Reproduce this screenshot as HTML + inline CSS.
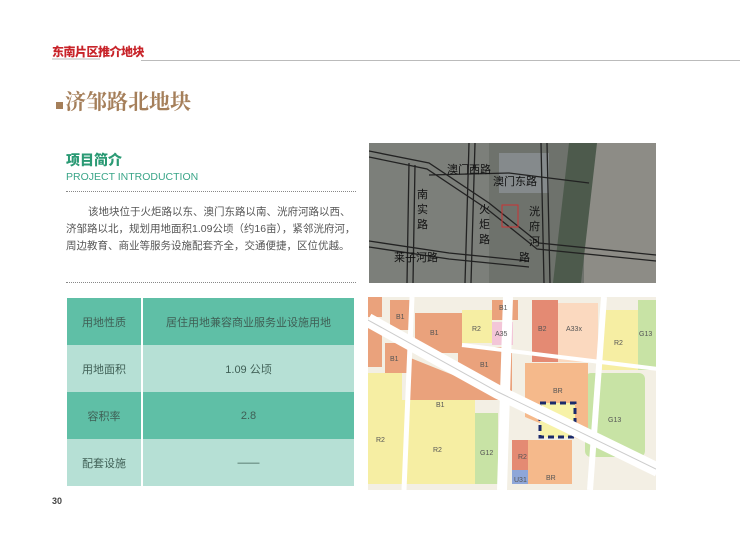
<!DOCTYPE html>
<html><head><meta charset="utf-8"><style>
body{margin:0;width:740px;height:545px;background:#fff;position:relative;overflow:hidden;font-family:"Liberation Sans","Noto Sans CJK SC",sans-serif}
.a{position:absolute}
table{border-collapse:collapse}
td{text-align:center;color:#3f5f55;font-size:11px;height:47px;padding:0}
</style></head><body>
<div class="a" style="left:52px;top:43px;font-size:12px;font-weight:900;color:#c8242a;letter-spacing:-0.5px;font-family:'Noto Sans CJK SC',sans-serif">东南片区推介地块</div>
<div class="a" style="left:52px;top:58px;width:48px;height:2px;background:#ddd"></div>
<div class="a" style="left:141px;top:60px;width:599px;height:1px;background:#bbb"></div>
<div class="a" style="left:56px;top:102px;width:7px;height:7px;background:#a57f5a"></div>
<div class="a" style="left:65px;top:86px;font-size:21px;font-weight:bold;color:#a57f5a;font-family:'Noto Serif CJK SC',serif">济邹路北地块</div>
<div class="a" style="left:66px;top:150px;font-size:14px;font-weight:900;color:#2a9a74;font-family:'Noto Sans CJK SC',sans-serif">项目简介</div>
<div class="a" style="left:66px;top:171px;font-size:10.5px;color:#3aa588">PROJECT INTRODUCTION</div>
<div class="a" style="left:66px;top:191px;width:290px;border-top:1px dotted #888"></div>
<div class="a" style="left:66px;top:204px;width:290px;font-size:10.5px;line-height:17px;color:#555;text-indent:22px;font-family:'Liberation Sans','Noto Sans CJK SC',sans-serif">该地块位于火炬路以东、澳门东路以南、洸府河路以西、济邹路以北，规划用地面积1.09公顷（约16亩），紧邻洸府河，周边教育、商业等服务设施配套齐全，交通便捷，区位优越。</div>
<div class="a" style="left:66px;top:282px;width:290px;border-top:1px dotted #888"></div>
<table class="a" style="left:67px;top:298px;width:287px">
<tr style="background:#5fbfa6"><td style="width:74px;border-right:2px solid #fff">用地性质</td><td>居住用地兼容商业服务业设施用地</td></tr>
<tr style="background:#b6e0d5"><td style="border-right:2px solid #fff">用地面积</td><td>1.09 公顷</td></tr>
<tr style="background:#5fbfa6"><td style="border-right:2px solid #fff">容积率</td><td>2.8</td></tr>
<tr style="background:#b6e0d5"><td style="border-right:2px solid #fff">配套设施</td><td>——</td></tr>
</table>
<div class="a" style="left:52px;top:496px;font-size:9px;font-weight:bold;color:#444">30</div>

<svg class="a" style="left:369px;top:143px" width="287" height="140" viewBox="0 0 287 140">
<rect width="287" height="140" fill="#6e726c"/>
<rect x="0" y="0" width="120" height="140" fill="#7c7f7a"/>
<rect x="215" y="0" width="72" height="140" fill="#8d8c86"/>
<polygon points="200,0 228,0 212,140 184,140" fill="#4d5a4c"/>
<rect x="130" y="10" width="50" height="40" fill="#858a8c"/>
<g stroke="#222" stroke-width="1.3" fill="none">
<path d="M0,8 L60,20 L120,60 L170,100 L287,112"/>
<path d="M0,14 L58,26 L118,66 L168,106 L287,118"/>
<path d="M0,98 L80,110 L160,118"/>
<path d="M0,104 L80,116 L160,124"/>
<path d="M40,20 L38,140 M46,22 L44,140"/>
<path d="M100,0 L96,140 M106,0 L102,140"/>
<path d="M172,0 L175,140 M178,0 L181,140"/>
<path d="M60,32 L140,30 L220,40"/>
</g>
<rect x="133" y="62" width="16" height="22" fill="none" stroke="#c33" stroke-width="1"/>
<g font-size="11" fill="#111" font-family="Noto Sans CJK SC,sans-serif">
<text x="78" y="30">澳门西路</text><text x="124" y="42">澳门东路</text>
<text x="48" y="55">南</text><text x="48" y="70">实</text><text x="48" y="85">路</text>
<text x="110" y="70">火</text><text x="110" y="85">炬</text><text x="110" y="100">路</text>
<text x="160" y="72">洸</text><text x="160" y="87">府</text><text x="160" y="102">河</text><text x="150" y="118">路</text>
<text x="25" y="118">莱子河路</text></g>
</svg>

<svg class="a" style="left:368px;top:297px" width="288" height="193" viewBox="0 0 288 193">
<rect width="288" height="193" fill="#f3efe4"/>
<g fill="#eaa27c">
<rect x="0" y="0" width="14" height="20"/><rect x="22" y="3" width="22" height="30"/>
<rect x="47" y="16" width="47" height="40"/><rect x="124" y="3" width="26" height="20"/>
<rect x="90" y="50" width="54" height="53" rx="5"/><rect x="17" y="46" width="23" height="30"/>
<polygon points="40,60 90,80 107,110 107,143 40,143"/>
<rect x="0" y="30" width="14" height="40"/>
</g>
<g fill="#f6eea3">
<rect x="94" y="13" width="30" height="33"/><rect x="234" y="13" width="36" height="60"/>
<rect x="34" y="103" width="73" height="84"/><rect x="0" y="76" width="34" height="111"/>
</g>
<rect x="124" y="25" width="21" height="23" fill="#f3c6d8"/>
<rect x="164" y="3" width="26" height="62" fill="#e48a73"/>
<rect x="190" y="6" width="40" height="59" fill="#fbd9bf"/>
<g fill="#c8e3a5"><rect x="270" y="3" width="18" height="70"/><rect x="217" y="76" width="60" height="84" rx="6"/><rect x="107" y="116" width="23" height="71"/></g>
<polygon points="157,66 220,66 220,146 157,120" fill="#f5b98b"/>
<rect x="144" y="143" width="60" height="44" fill="#f5b98b"/>
<rect x="144" y="143" width="16" height="30" fill="#e48a73"/>
<rect x="144" y="173" width="16" height="14" fill="#8ea6d8"/>
<rect x="172" y="106" width="35" height="34" fill="#f7f2a8" stroke="#1b2a6b" stroke-width="3" stroke-dasharray="6,4"/>
<g stroke="#fff" fill="none">
<path d="M0,23 L130,95 L290,173" stroke-width="14"/>
<path d="M44,0 L36,193" stroke-width="5"/>
<path d="M140,0 L134,193" stroke-width="10"/>
<path d="M236,0 L222,193" stroke-width="6"/>
<path d="M94,48 L290,72" stroke-width="4"/>
</g>
<path d="M0,23 L130,95 L290,173" stroke="#ccc" stroke-width="1" fill="none"/>
<g font-size="7" fill="#555">
<text x="28" y="22">B1</text><text x="62" y="38">B1</text><text x="104" y="34">R2</text><text x="127" y="39">A35</text>
<text x="131" y="13">B1</text><text x="112" y="70">B1</text><text x="170" y="34">B2</text><text x="198" y="34">A33x</text>
<text x="246" y="48">R2</text><text x="271" y="39">G13</text><text x="22" y="64">B1</text><text x="68" y="110">B1</text>
<text x="185" y="96">BR</text><text x="240" y="125">G13</text><text x="65" y="155">R2</text><text x="112" y="158">G12</text>
<text x="8" y="145">R2</text><text x="150" y="162">R2</text><text x="178" y="183">BR</text><text x="146" y="185">U31</text>
</g>
</svg>
</body></html>
